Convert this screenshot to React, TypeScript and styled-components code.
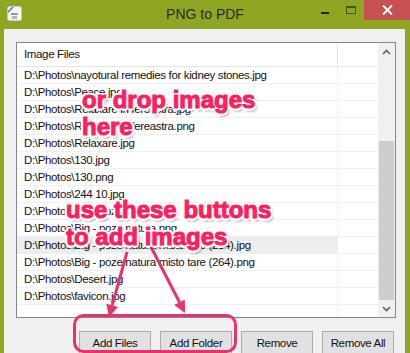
import React from "react";
import styled, { createGlobalStyle } from "styled-components";

const GlobalStyle = createGlobalStyle`
  html, body {
    margin: 0;
    padding: 0;
    background: #ffffff;
  }
`;

const files = [
  "D:\\Photos\\nayotural remedies for kidney stones.jpg",
  "D:\\Photos\\Peace.jpg",
  "D:\\Photos\\Relaxare in fereastra.jpg",
  "D:\\Photos\\Relaxare in fereastra.png",
  "D:\\Photos\\Relaxare.jpg",
  "D:\\Photos\\130.jpg",
  "D:\\Photos\\130.png",
  "D:\\Photos\\244 10.jpg",
  "D:\\Photos\\Big - poze natura.jpg",
  "D:\\Photos\\Big - poze natura.png",
  "D:\\Photos\\Big - poze natura misto tare (234).jpg",
  "D:\\Photos\\Big - poze natura misto tare (264).png",
  "D:\\Photos\\Desert.jpg",
  "D:\\Photos\\favicon.jpg",
  "",
];

const uiFont = `"Liberation Sans", Arial, sans-serif`;

const App = (): JSX.Element => (
  <>
    <GlobalStyle />
    <Window>
      <TitleBar>
        <TitleIcon>
          <svg width="15" height="15" viewBox="0 0 15 15">
            <rect x="0.5" y="0.5" width="14" height="14" rx="2" fill="#f4f4f4" stroke="#c9c9c9" />
            <path d="M1 5 L5 1 L7 1 L1 7 Z" fill="#2e7fd6" />
            <path d="M4 7 h7 v2 h-7 z" fill="#9a9a9a" />
            <path d="M5 10 h5 v3 h-5 z" fill="#b5b5b5" />
          </svg>
        </TitleIcon>
        <TitleText>PNG to PDF</TitleText>
        <Controls>
          <CtrlButton>
            <MinGlyph />
          </CtrlButton>
          <CtrlButton>
            <MaxGlyph />
          </CtrlButton>
          <CloseButton>
            <svg width="11" height="10" viewBox="0 0 11 10">
              <path d="M1 0.5 L10 9.5 M10 0.5 L1 9.5" stroke="#fff" strokeWidth="2" />
            </svg>
          </CloseButton>
        </Controls>
      </TitleBar>

      <Client>
        <ListView>
          <Table>
            <HeaderRow>
              <HeaderCell>Image Files</HeaderCell>
              <HeaderCell />
            </HeaderRow>
            {files.map((f, i) => (
              <Row key={i} selected={i === 10}>
                <Cell>{f}</Cell>
                <Cell />
              </Row>
            ))}
          </Table>
          <ScrollBar>
            <ScrollArrow>
              <svg width="9" height="6" viewBox="0 0 9 6">
                <path d="M1 5 L4.5 1.5 L8 5" stroke="#606060" strokeWidth="1.6" fill="none" />
              </svg>
            </ScrollArrow>
            <Track>
              <Thumb />
            </Track>
            <ScrollArrow>
              <svg width="9" height="6" viewBox="0 0 9 6">
                <path d="M1 1 L4.5 4.5 L8 1" stroke="#606060" strokeWidth="1.6" fill="none" />
              </svg>
            </ScrollArrow>
          </ScrollBar>
        </ListView>

        <ButtonRow>
          <Button>Add Files</Button>
          <Button>Add Folder</Button>
          <Button>Remove</Button>
          <Button>Remove All</Button>
        </ButtonRow>
      </Client>

      <Marks width="410" height="353" viewBox="0 0 410 353">
        <rect x="74.5" y="315.5" width="161" height="36" rx="9" fill="none" stroke="#e8336a" strokeWidth="3" />
        <line x1="127" y1="252" x2="112.2" y2="305.4" stroke="#e8336a" strokeWidth="3" />
        <polygon points="109,317 118,307 106.4,303.8" fill="#e8336a" />
        <line x1="151" y1="247" x2="179.5" y2="302.3" stroke="#e8336a" strokeWidth="3" />
        <polygon points="185,313 184.8,299.6 174.2,305.1" fill="#e8336a" />
      </Marks>

      <Note top={86} left={82}>
        or drop images
        <br />
        here
      </Note>
      <Note top={196} left={66}>
        use these buttons
        <br />
        to add images
      </Note>
    </Window>
  </>
);

const Window = styled.div`
  position: relative;
  width: 410px;
  height: 353px;
  overflow: hidden;
  background: #8fa623;
  font-family: ${uiFont};
`;

const TitleBar = styled.div`
  display: grid;
  grid-template-columns: 98px 1fr 98px;
  height: 29px;
`;

const TitleIcon = styled.div`
  padding: 6px 0 0 7px;
`;

const TitleText = styled.div`
  text-align: center;
  font-size: 14px;
  line-height: 28px;
  color: #2a2a2a;
`;

const Controls = styled.div`
  display: flex;
  align-items: flex-start;
`;

const CtrlButton = styled.div`
  width: 26px;
  height: 20px;
  display: flex;
  align-items: center;
  justify-content: center;
`;

const MinGlyph = styled.div`
  width: 8px;
  height: 2px;
  margin-top: 6px;
  background: #1e1e1e;
`;

const MaxGlyph = styled.div`
  width: 8px;
  height: 5px;
  margin-top: -1px;
  border: 1px solid #46561a;
  border-top-width: 2px;
`;

const CloseButton = styled.div`
  width: 46px;
  height: 20px;
  background: #c75050;
  display: flex;
  align-items: center;
  justify-content: center;
`;

const Client = styled.div`
  margin: 0 5px 0 4px;
  height: 324px;
  background: #f0f0f0;
  padding: 13px 11px 0 12px;
  box-sizing: border-box;
`;

const ListView = styled.div`
  display: flex;
  width: 380px;
  height: 276px;
  box-sizing: border-box;
  border: 1px solid #828790;
  background: #ffffff;
`;

const Table = styled.div`
  flex: 1;
  overflow: hidden;
  font-size: 11.5px;
  letter-spacing: -0.35px;
  color: #111;
`;

const HeaderRow = styled.div`
  display: grid;
  grid-template-columns: 321px 1fr;
  height: 24px;
  box-sizing: border-box;
  border-bottom: 1px solid #e5e5e5;
`;

const HeaderCell = styled.div`
  padding-left: 7px;
  line-height: 23px;
  border-right: 1px solid #e2e8f0;
  &:last-child {
    border-right: none;
  }
`;

const Row = styled.div<{ selected?: boolean }>`
  display: grid;
  grid-template-columns: 321px 1fr;
  height: 17px;
  box-sizing: border-box;
  border-bottom: 1px solid #f0f0f0;
  & > div:first-child {
    background: ${(p) => (p.selected ? "#ededed" : "transparent")};
  }
`;

const Cell = styled.div`
  padding-left: 7px;
  line-height: 16px;
  white-space: nowrap;
  overflow: hidden;
  border-right: 1px solid #f0f0f0;
  &:last-child {
    border-right: none;
  }
`;

const ScrollBar = styled.div`
  width: 17px;
  display: flex;
  flex-direction: column;
  background: #f0f0f0;
`;

const ScrollArrow = styled.div`
  height: 17px;
  display: flex;
  align-items: center;
  justify-content: center;
`;

const Track = styled.div`
  flex: 1;
  padding: 0 1px;
`;

const Thumb = styled.div`
  margin-top: 81px;
  height: 159px;
  background: #cdcdcd;
`;

const ButtonRow = styled.div`
  display: flex;
  justify-content: flex-end;
  gap: 9px;
  margin-top: 13px;
`;

const Button = styled.div`
  width: 72px;
  height: 23px;
  box-sizing: border-box;
  border: 1px solid #adadad;
  background: #e1e1e1;
  font-size: 11.5px;
  letter-spacing: -0.35px;
  color: #111;
  display: flex;
  align-items: center;
  justify-content: center;
`;

const Marks = styled.svg`
  position: absolute;
  left: 0;
  top: 0;
  pointer-events: none;
`;

const Note = styled.div<{ top: number; left: number }>`
  position: absolute;
  top: ${(p) => p.top}px;
  left: ${(p) => p.left}px;
  font-family: ${uiFont};
  font-weight: bold;
  font-size: 24px;
  line-height: 27px;
  color: #ff1e5f;
  -webkit-text-stroke: 1px #ff1e5f;
  white-space: nowrap;
  text-shadow: -2.5px 0 #fff, 2.5px 0 #fff, 0 -2.5px #fff, 0 2.5px #fff,
    -2px -2px #fff, 2px -2px #fff, -2px 2px #fff, 2px 2px #fff,
    2px 3px 3px rgba(0, 0, 0, 0.5);
`;

export default App;
